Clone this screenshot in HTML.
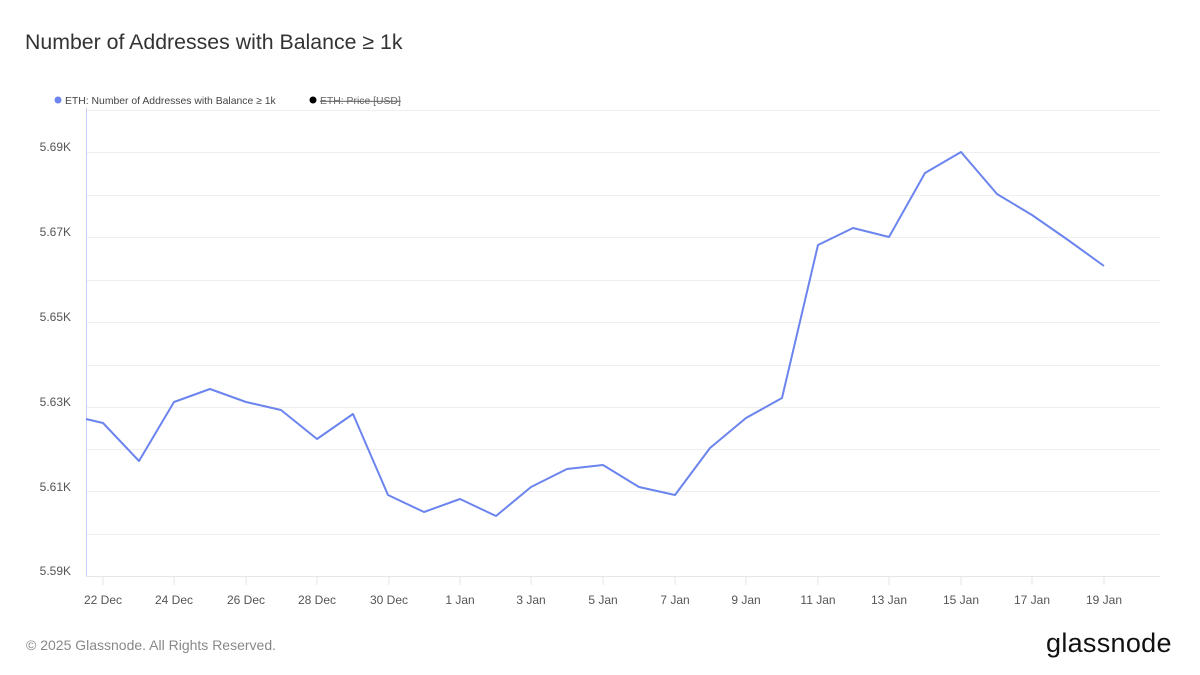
<!DOCTYPE html>
<html><head><meta charset="utf-8"><style>
body{margin:0;width:1200px;height:675px;background:#fff;font-family:"Liberation Sans",sans-serif;overflow:hidden;position:relative}
.t{position:absolute;left:25px;top:30px;font-size:21.3px;color:#333}
.f{position:absolute;left:26px;top:637px;font-size:14px;color:#888}
.logo{position:absolute;left:1046px;top:628px;font-size:27px;color:#111;letter-spacing:0.3px}
</style></head><body>
<div class="t">Number of Addresses with Balance ≥ 1k</div>
<svg width="1200" height="675" style="position:absolute;left:0;top:0" font-family="Liberation Sans, sans-serif">
<circle cx="58" cy="100" r="3.5" fill="#6c84ee"/>
<text x="65" y="104" font-size="10.4" fill="#444">ETH: Number of Addresses with Balance ≥ 1k</text>
<circle cx="313" cy="100" r="3.5" fill="#000"/>
<text x="320" y="104" font-size="10.4" fill="#666" text-decoration="line-through">ETH: Price [USD]</text>
<g stroke="#efefef" stroke-width="1">
<line x1="86" x2="1160" y1="110.5" y2="110.5"/>
<line x1="86" x2="1160" y1="152.5" y2="152.5"/>
<line x1="86" x2="1160" y1="195.5" y2="195.5"/>
<line x1="86" x2="1160" y1="237.5" y2="237.5"/>
<line x1="86" x2="1160" y1="280.5" y2="280.5"/>
<line x1="86" x2="1160" y1="322.5" y2="322.5"/>
<line x1="86" x2="1160" y1="365.5" y2="365.5"/>
<line x1="86" x2="1160" y1="407.5" y2="407.5"/>
<line x1="86" x2="1160" y1="449.5" y2="449.5"/>
<line x1="86" x2="1160" y1="491.5" y2="491.5"/>
<line x1="86" x2="1160" y1="534.5" y2="534.5"/>
<line x1="86" x2="1160" y1="576.5" y2="576.5" stroke="#e6e6e6"/>
</g>
<g stroke="#e6e6e6">
<line x1="103" x2="103" y1="577" y2="585"/><line x1="174" x2="174" y1="577" y2="585"/><line x1="246" x2="246" y1="577" y2="585"/>
<line x1="317" x2="317" y1="577" y2="585"/><line x1="389" x2="389" y1="577" y2="585"/><line x1="460" x2="460" y1="577" y2="585"/>
<line x1="531" x2="531" y1="577" y2="585"/><line x1="603" x2="603" y1="577" y2="585"/><line x1="675" x2="675" y1="577" y2="585"/>
<line x1="746" x2="746" y1="577" y2="585"/><line x1="818" x2="818" y1="577" y2="585"/><line x1="889" x2="889" y1="577" y2="585"/>
<line x1="961" x2="961" y1="577" y2="585"/><line x1="1032" x2="1032" y1="577" y2="585"/><line x1="1104" x2="1104" y1="577" y2="585"/>
</g>
<line x1="86.5" x2="86.5" y1="108" y2="576" stroke="#c8cdf5"/>
<g font-size="12" fill="#555" text-anchor="end">
<text x="71" y="151">5.69K</text><text x="71" y="236">5.67K</text><text x="71" y="321">5.65K</text>
<text x="71" y="406">5.63K</text><text x="71" y="491">5.61K</text><text x="71" y="575">5.59K</text>
</g>
<g font-size="12" fill="#555" text-anchor="middle">
<text x="103" y="604">22 Dec</text><text x="174" y="604">24 Dec</text><text x="246" y="604">26 Dec</text>
<text x="317" y="604">28 Dec</text><text x="389" y="604">30 Dec</text><text x="460" y="604">1 Jan</text>
<text x="531" y="604">3 Jan</text><text x="603" y="604">5 Jan</text><text x="675" y="604">7 Jan</text>
<text x="746" y="604">9 Jan</text><text x="818" y="604">11 Jan</text><text x="889" y="604">13 Jan</text>
<text x="961" y="604">15 Jan</text><text x="1032" y="604">17 Jan</text><text x="1104" y="604">19 Jan</text>
</g>
<polyline fill="none" stroke="#6c84ee" stroke-width="2" stroke-linejoin="round" points="86,419 103,423 139,461 174,402 210,389 246,402 281,410 317,439 353,414 388,495 424,512 460,499 496,516 531,487 567,469 603,465 639,487 675,495 710,448 746,418 782,398 818,245 853,228 889,237 925,173 961,152 997,194 1032,215 1068,240 1104,266"/>
</svg>
<div class="f">© 2025 Glassnode. All Rights Reserved.</div>
<div class="logo">glassnode</div>
</body></html>
